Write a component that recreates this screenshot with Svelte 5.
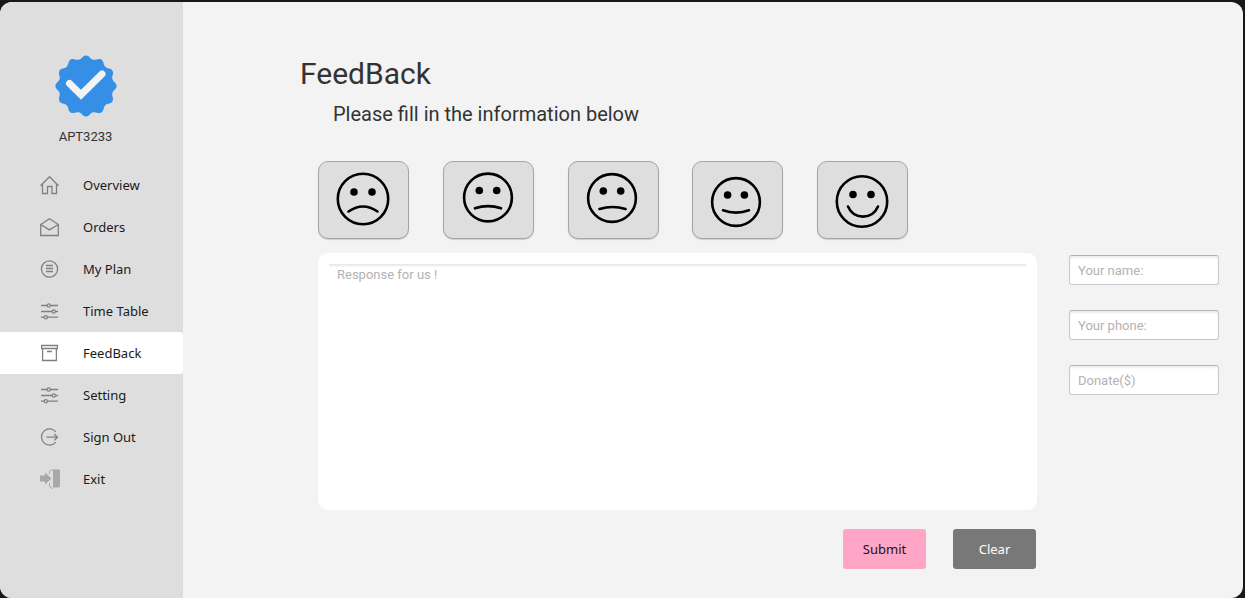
<script>
  const menu = ['Overview', 'Orders', 'My Plan', 'Time Table', 'FeedBack', 'Setting', 'Sign Out', 'Exit'];
  const icons = ['home', 'mail', 'list', 'sliders', 'archive', 'sliders', 'signout', 'exit'];
  let active = $state('FeedBack');

  const faces = [
    { label: 'Very unhappy', cx: 28, cy: 28, r: 25.2, eye: 9, mouth: 'M13.500 40.500Q28 30.500 42.500 40.500' },
    { label: 'Unhappy', cx: 29, cy: 26.5, r: 23.9, eye: 8.7, mouth: 'M16 37.300Q29 33 42 37.300' },
    { label: 'Neutral', cx: 28, cy: 27, r: 23.9, eye: 8.7, mouth: 'M15.500 38Q28.500 34 41.500 38' },
    { label: 'Happy', cx: 27, cy: 31, r: 23.9, eye: 8.4, mouth: 'M14 39.300Q27 44 40 39.300' },
    { label: 'Very happy', cx: 28, cy: 30.5, r: 25.2, eye: 9, mouth: 'M14 35.500C20 49 38 49 44 35.500' }
  ];

  // Twelve soft lobes around the badge centre
  const polar = (r, deg) => {
    const a = (deg * Math.PI) / 180;
    return `${(31 + r * Math.sin(a)).toFixed(2)} ${(31 - r * Math.cos(a)).toFixed(2)}`;
  };
  let badge = `M${polar(27.3, -15)}`;
  for (let i = 0; i < 12; i++) {
    badge += `C${polar(27.6, i * 30 - 8)} ${polar(30.8, i * 30 - 6)} ${polar(30.6, i * 30)}`;
    badge += `C${polar(30.8, i * 30 + 6)} ${polar(27.6, i * 30 + 8)} ${polar(27.3, i * 30 + 15)}`;
  }

  let response = $state('');
  let name = $state('');
  let phone = $state('');
  let donation = $state('');
  let mood = $state('');

  function clear() {
    response = name = phone = donation = mood = '';
  }
</script>

<div class="window">
  <aside class="sidebar">
    <div class="profile">
      <svg width="62" height="62" viewBox="0 0 62 62" aria-hidden="true">
        <path d={badge + 'Z'} fill="#368fe6" />
        <path d="M14.5 28.5L26 39.8L47 19" fill="none" stroke="#f3f3f3" stroke-width="7" stroke-linecap="round" />
      </svg>
      <span>APT3233</span>
    </div>
    <nav>
      {#each menu as item, i}
        <button class="item" class:active={active === item} onclick={() => (active = item)}>
          <svg class="icon" width="20" height="20" viewBox="0 0 20 20" aria-hidden="true">
            {#if icons[i] === 'home'}
              <path d="M.5 10.8L9.5 1.700l9 9.100M2.500 9.300v9.200h5v-7h4.500v7h4.500V9.300" />
            {:else if icons[i] === 'mail'}
              <path d="M.7 7.500L9.500 1.700l8.800 5.800v11H.7zM.7 7.500l8.800 5.400 8.800-5.400" />
            {:else if icons[i] === 'list'}
              <circle cx="9.5" cy="10" r="8.1" />
              <path d="M6 6.500h7M6 9.500h7M6 12.500h7" />
            {:else if icons[i] === 'sliders'}
              <path d="M1 4.500h6.200M10.300 4.500H18M1 10.500h11.200M15.300 10.500H18M1 16.200h3.200M7.300 16.200H18" />
              <circle cx="8.7" cy="4.5" r="1.6" />
              <circle cx="13.7" cy="10.5" r="1.6" />
              <circle cx="5.8" cy="16.2" r="1.6" />
            {:else if icons[i] === 'archive'}
              <path d="M1.600 2.500h15.800v3H1.600zM2.600 5.500v12h13.800v-12M7 8.500h5" />
            {:else if icons[i] === 'signout'}
              <path d="M15.800 4.800A8.100 8.100 0 1 0 15.800 15.200M6.500 10.200h10.700M14.200 7l3.300 3.200-3.300 3.200" />
            {:else}
              <path class="solid" d="M0 6.500h5V3.500l6.500 6-6.500 6v-3H0zM13 .5h6l1 1v16l-1 1h-6z" />
              <path class="frame" d="M9.500 5V2.500Q10 1 13 .7M9.500 14v3q.5 2 3.500 2.500" />
            {/if}
          </svg>
          {item}
        </button>
      {/each}
    </nav>
  </aside>

  <main>
    <header>
      <h1>FeedBack</h1>
      <p>Please fill in the information below</p>
    </header>

    <form onsubmit={(e) => e.preventDefault()}>
      <div class="faces">
        {#each faces as f}
          <button type="button" class="face" aria-label={f.label} aria-pressed={mood === f.label} onclick={() => (mood = f.label)}>
            <svg width="58" height="58" viewBox="0 0 58 58" aria-hidden="true">
              <circle cx={f.cx} cy={f.cy} r={f.r} fill="none" stroke="#000" stroke-width="2.6" />
              <circle cx={f.cx - f.eye} cy={f.cy - 7} r="3.8" />
              <circle cx={f.cx + f.eye} cy={f.cy - 7} r="3.8" />
              <path d={f.mouth} fill="none" stroke="#000" stroke-width="2.6" stroke-linecap="round" />
            </svg>
          </button>
        {/each}
      </div>

      <div class="columns">
        <div class="response">
          <div class="paper">
            <textarea aria-label="Response" placeholder="Response for us !" bind:value={response}></textarea>
          </div>
          <div class="actions">
            <button type="submit" class="submit">Submit</button>
            <button type="button" class="clear" onclick={clear}>Clear</button>
          </div>
        </div>
        <div class="details">
          <input aria-label="Your name" placeholder="Your name:" bind:value={name} />
          <input aria-label="Your phone" placeholder="Your phone:" type="tel" bind:value={phone} />
          <input aria-label="Donate in dollars" placeholder="Donate($)" inputmode="decimal" bind:value={donation} />
        </div>
      </div>
    </form>
  </main>
</div>

<style>
  :global(body) {
    background: #1a1718;
  }
  :global(#app) {
    display: flex;
    box-sizing: border-box;
    min-height: 100vh;
    padding: 2px 2px 0 0;
  }
  .window {
    display: flex;
    flex: 1;
    overflow: hidden;
    border-radius: 12px;
    background: #f3f3f3;
    color: #333;
    font-family: Roboto, sans-serif;
  }
  button,
  input,
  textarea {
    box-sizing: border-box;
    margin: 0;
    font-size: 13px;
  }
  button {
    font-family: "Noto Sans", sans-serif;
    cursor: pointer;
  }
  .sidebar {
    flex: none;
    width: 183px;
    background: #dedede;
  }
  .profile {
    display: flex;
    flex-direction: column;
    align-items: center;
    gap: 12px;
    padding: 53px 12px 19px 0;
    font-size: 13px;
    line-height: 16px;
  }
  nav {
    display: flex;
    flex-direction: column;
  }
  .item {
    display: flex;
    align-items: center;
    gap: 23px;
    height: 42px;
    padding: 0 0 0 40px;
    border: 0;
    border-radius: 0 3px 3px 0;
    background: none;
    color: #1a1a1a;
    text-align: left;
  }
  .item.active {
    background: #fff;
  }
  .icon {
    flex: none;
    fill: none;
    stroke: #808080;
    stroke-width: 1.3;
  }
  .solid {
    fill: #a7a8aa;
    stroke: none;
  }
  .frame {
    stroke: #a7a8aa;
    stroke-width: 1;
  }
  main {
    flex: 1;
    min-width: 0;
    padding: 52px 24px 28px 117px;
  }
  h1,
  p {
    margin: 0;
    font-weight: 400;
  }
  h1 {
    font-size: 30px;
    line-height: 40px;
  }
  p {
    padding: 8px 0 0 33px;
    font-size: 20px;
    line-height: 24px;
  }
  form {
    padding: 35px 0 0 18px;
  }
  .faces {
    display: flex;
    justify-content: space-between;
    max-width: 590px;
  }
  .face {
    display: grid;
    place-items: center;
    width: 91px;
    height: 78px;
    padding: 0;
    border: 1px solid #a5a5a5;
    border-radius: 10px;
    background: #dedede;
    box-shadow: 0 1px 1px #ccc;
  }
  .columns {
    display: flex;
    gap: 32px;
    padding-top: 14px;
  }
  .response {
    flex: 1;
    min-width: 0;
  }
  .paper {
    padding: 11px;
    border-radius: 10px;
    background: #fff;
  }
  textarea {
    display: block;
    width: 100%;
    height: 235px;
    padding: 3px 8px;
    border: 0;
    outline: none;
    resize: none;
    background: none;
    box-shadow: inset 0 3px 2px -1px #e8e8e8;
    font-family: inherit;
    line-height: 16px;
  }
  ::placeholder {
    color: #b3b3b3;
    opacity: 1;
  }
  .actions {
    display: flex;
    justify-content: flex-end;
    gap: 27px;
    padding: 19px 1px 0 0;
  }
  .actions button {
    width: 83px;
    height: 40px;
    padding: 0;
    border: 0;
    border-radius: 3px;
  }
  .actions .submit {
    background: #ffa6c6;
    color: #1f1023;
  }
  .actions .clear {
    background: #787878;
    color: #fff;
  }
  .details {
    display: flex;
    flex-direction: column;
    gap: 25px;
    width: 150px;
    padding-top: 2px;
  }
  input {
    width: 100%;
    height: 30px;
    padding: 0 8px;
    border: 1px solid #c8c8c8;
    border-top-color: #b3b3b3;
    border-radius: 3px;
    background: #fff;
    box-shadow: inset 0 2px 2px #eee;
    font-family: inherit;
  }
</style>
